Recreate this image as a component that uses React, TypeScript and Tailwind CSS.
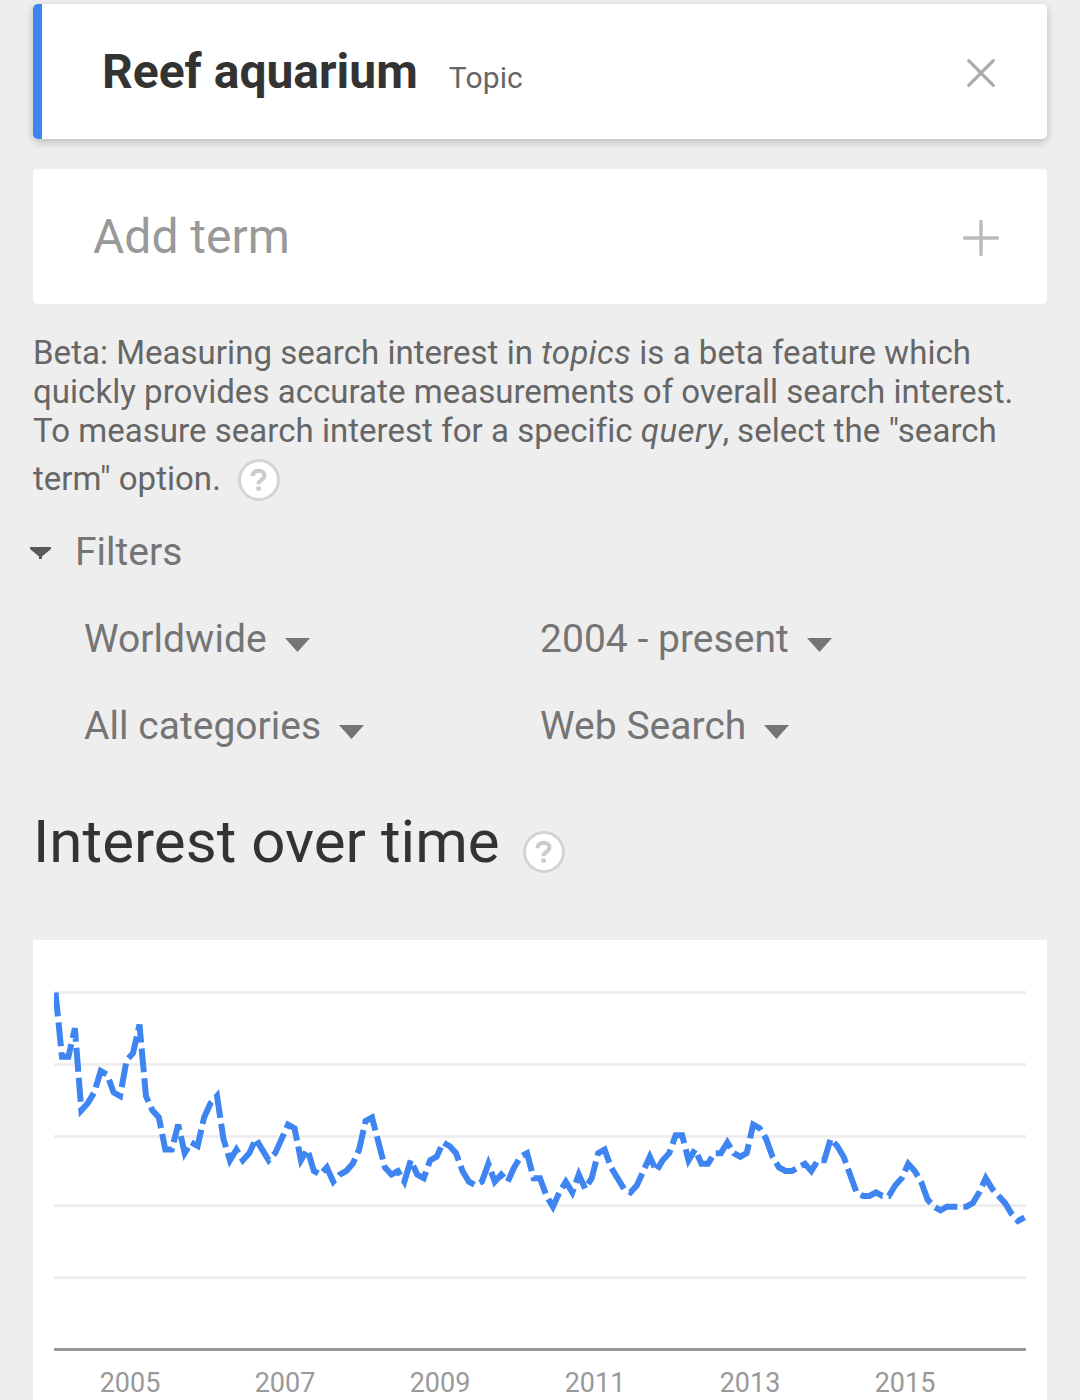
import { clsx } from "clsx";

// monthly search interest, Jan 2004 onwards
const interest = [
  100, 82, 82, 90, 67, 69, 72, 78, 77, 72, 71, 81,
  83, 91, 71, 67, 65, 56, 56, 63, 55, 58, 57, 65,
  69, 71, 59, 53, 56, 53, 55, 59, 56, 53, 55, 59,
  63, 62, 53, 56, 50, 49, 51, 47, 49, 50, 52, 56,
  64, 65, 58, 51, 49, 50, 47, 53, 49, 48, 53, 54,
  58, 57, 55, 50, 47, 46, 47, 52, 47, 49, 47, 51,
  54, 55, 48, 48, 43, 40, 44, 47, 44, 49, 45, 48,
  55, 56, 51, 48, 45, 44, 46, 50, 54, 50, 53, 55,
  60, 60, 53, 56, 52, 52, 55, 55, 58, 55, 54, 55,
  63, 62, 59, 54, 51, 50, 50, 51, 52, 50, 53, 53,
  59, 57, 54, 49, 44, 43, 43, 44, 43, 43, 46, 48,
  52, 50, 47, 42, 40, 39, 40, 40, 40, 40, 41, 44,
  48, 45, 43, 41, 38, 36, 37,
];

const gridLines = [51, 123, 195, 264, 336];

const years = ["2005", "2007", "2009", "2011", "2013", "2015"];

const points = interest
  .map((v, i) => `${(22.5 + i * 6.46).toFixed(2)},${(409.5 - v * 3.57).toFixed(2)}`)
  .join(" ");

const HelpIcon = ({ className }: { className?: string }) => (
  <svg viewBox="0 0 42 42" className={clsx("h-[42px] w-[42px]", className)}>
    <circle cx="21" cy="21" r="19.5" fill="#fff" stroke="#d4d4d4" strokeWidth="3" />
    <path
      d="M14.5 17.2c.2-3.6 2.8-5.4 6.1-5.4 3.4 0 5.8 1.8 5.8 4.7 0 4.4-5.9 4.5-5.9 8.7"
      fill="none"
      stroke="#cbcbcb"
      strokeWidth="4"
    />
    <rect x="18.3" y="27.4" width="4.5" height="4.4" rx="1" fill="#cbcbcb" />
  </svg>
);

const Filter = ({ label }: { label: string }) => (
  <div className="flex h-[87px] items-center">
    <span className="tracking-[0.03px]">{label}</span>
    <svg viewBox="0 0 25 14" className="ml-[18px] mt-[11px] h-[14px] w-[25px]">
      <path d="M0 0h25L12.5 14z" fill="#757575" />
    </svg>
  </div>
);

const InterestChart = () => (
  <div className="h-[460px] bg-white">
    <svg viewBox="0 0 1014 414" className="block h-[414px] w-full">
      {gridLines.map((y) => (
        <rect key={y} x="21" y={y} width="972" height="3" fill="#eee" />
      ))}
      <rect x="21" y="408" width="972" height="3" fill="#999" />
      <svg x="21" y="51" width="972" height="360" viewBox="21 51 972 360">
        <polyline points={points} fill="none" stroke="#3f85f2" strokeWidth="6" strokeDasharray="24 6" />
      </svg>
    </svg>
    <div className="flex pl-[19.5px] text-[27px] leading-[57px] text-[#999]">
      {years.map((year) => (
        <span key={year} className="mt-[1px] w-[155px] text-center">
          {year}
        </span>
      ))}
    </div>
  </div>
);

const App = () => {
  return (
    <div className="h-[1400px] w-[1080px] overflow-hidden bg-[#eee] px-[33px] pt-1 font-['Roboto',sans-serif]">
      <div className="flex h-[135px] items-center justify-between rounded-[5px] border-l-[9px] border-[#3f85f2] bg-white pl-[60px] pr-[51px] shadow-[0_3px_9px_rgba(0,0,0,0.22)]">
        <div className="flex items-baseline">
          <h1 className="text-[48px] font-bold leading-[57px] text-[#333]">Reef aquarium</h1>
          <span className="ml-[31px] text-[30px] tracking-[0.15px] text-[#666]">Topic</span>
        </div>
        <svg viewBox="0 0 30 30" className="mt-[3px] h-[30px] w-[30px]">
          <path d="M2.7 2.7l24.6 24.6M27.3 2.7L2.7 27.3" stroke="#aaa" strokeWidth="3.2" strokeLinecap="round" />
        </svg>
      </div>

      <div className="mt-[30px] flex h-[135px] items-center justify-between rounded-[5px] bg-white pl-[60px] pr-12">
        <span className="text-[48px] leading-[57px] text-[#999]">Add term</span>
        <svg viewBox="0 0 36 36" className="mt-[3px] h-9 w-9">
          <path d="M1.5 18h33M18 1.5v33" stroke="#bbb" strokeWidth="3.4" strokeLinecap="round" />
        </svg>
      </div>

      <p className="mt-[29px] h-[175px] whitespace-nowrap text-[33px] leading-[39px] tracking-[0.035px] text-[#666]">
        Beta: Measuring search interest in <i className="tracking-[0.4px]">topics</i> is a beta feature which
        <br />
        quickly provides accurate measurements of overall search interest.
        <br />
        To measure search interest for a specific <i className="tracking-[0.5px]">query</i>, select the "search
        <br />
        term" option.
        <HelpIcon className="ml-[17.5px] mt-[9px] inline-block align-[-11px]" />
      </p>

      <div className="text-[39px] text-[#757575]">
        <div className="-ml-[3px] flex h-[88px] items-center">
          <svg viewBox="0 0 21 12" className="mt-[2px] h-3 w-[21px]">
            <path d="M0 0h21v2L12 9.5V12H9V9.5L0 2z" fill="#595959" />
          </svg>
          <span className="ml-6 mt-[1px]">Filters</span>
        </div>
        <div className="grid grid-cols-[456px_1fr] pl-[51px]">
          <Filter label="Worldwide" />
          <Filter label="2004 - present" />
          <Filter label="All categories" />
          <Filter label="Web Search" />
        </div>
      </div>

      <div className="flex h-[170px] items-center">
        <h2 className="-mt-[27px] text-[60px] leading-[70px] tracking-[0.03px] text-[#333]">Interest over time</h2>
        <HelpIcon className="-mt-[7px] ml-[23.5px]" />
      </div>

      <InterestChart />
    </div>
  );
};

export default App;
